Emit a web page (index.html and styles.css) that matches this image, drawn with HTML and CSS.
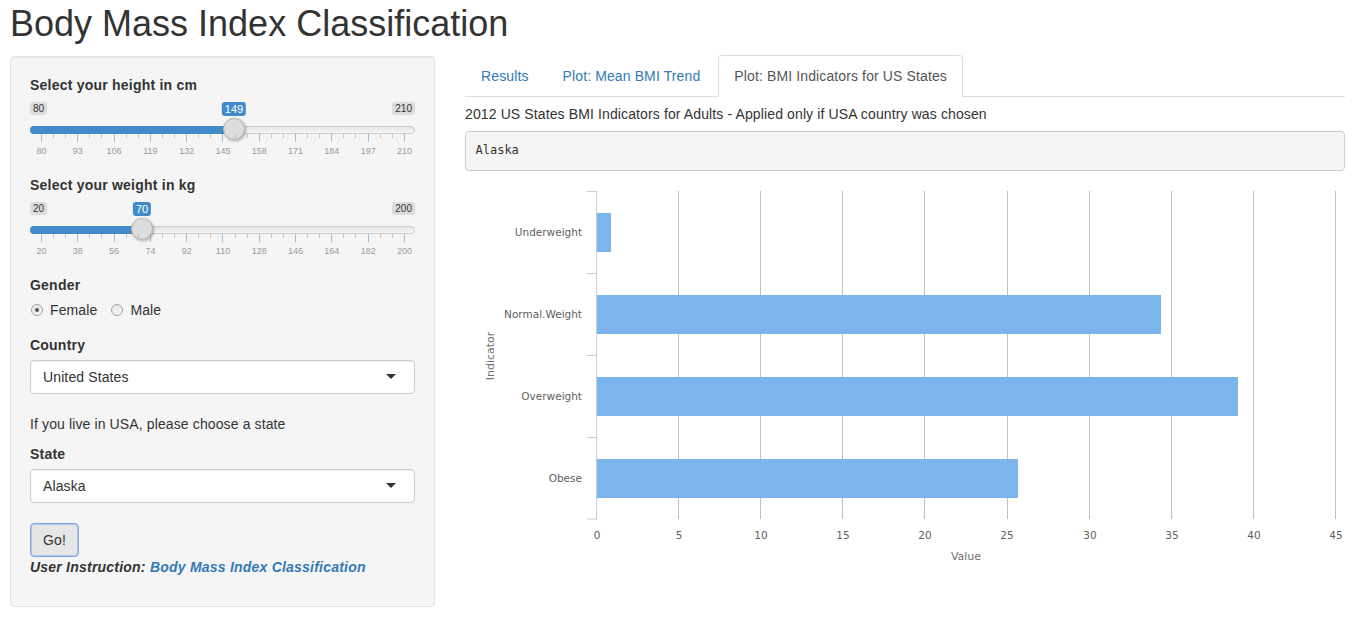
FILE: index.html
```html
<!DOCTYPE html>
<html lang="en">
<head>
<meta charset="utf-8">
<title>Body Mass Index Classification</title>
<link rel="stylesheet" href="styles.css">
</head>
<body>
<div class="page">
  <h1 class="title">Body Mass Index Classification</h1>
  <div class="layout">
    <aside class="well">
      <div class="form-group">
        <label class="control-label">Select your height in cm</label>
        <div class="irs">
          <div class="irs-labels">
            <span class="irs-min">80</span>
            <span class="irs-max">210</span>
          </div>
          <span class="irs-single" style="left:204px">149</span>
          <div class="irs-track">
            <span class="irs-bar" style="width:204px"></span>
            <span class="irs-handle" style="left:193px"></span>
          </div>
          <div class="irs-grid">
            <div class="irs-ticks">
              <i class="big"></i><i></i><i></i><i class="big"></i><i></i><i></i><i class="big"></i><i></i><i></i><i class="big"></i><i></i><i></i><i class="big"></i><i></i><i></i><i class="big"></i><i></i><i></i><i class="big"></i><i></i><i></i><i class="big"></i><i></i><i></i><i class="big"></i><i></i><i></i><i class="big"></i><i></i><i></i><i class="big"></i>
            </div>
            <div class="irs-grid-text">
              <span><b>80</b></span><span><b>93</b></span><span><b>106</b></span><span><b>119</b></span><span><b>132</b></span><span><b>145</b></span><span><b>158</b></span><span><b>171</b></span><span><b>184</b></span><span><b>197</b></span><span><b>210</b></span>
            </div>
          </div>
        </div>
      </div>

      <div class="form-group">
        <label class="control-label">Select your weight in kg</label>
        <div class="irs">
          <div class="irs-labels">
            <span class="irs-min">20</span>
            <span class="irs-max">200</span>
          </div>
          <span class="irs-single" style="left:112px">70</span>
          <div class="irs-track">
            <span class="irs-bar" style="width:112px"></span>
            <span class="irs-handle" style="left:101px"></span>
          </div>
          <div class="irs-grid">
            <div class="irs-ticks">
              <i class="big"></i><i></i><i></i><i class="big"></i><i></i><i></i><i class="big"></i><i></i><i></i><i class="big"></i><i></i><i></i><i class="big"></i><i></i><i></i><i class="big"></i><i></i><i></i><i class="big"></i><i></i><i></i><i class="big"></i><i></i><i></i><i class="big"></i><i></i><i></i><i class="big"></i><i></i><i></i><i class="big"></i>
            </div>
            <div class="irs-grid-text">
              <span><b>20</b></span><span><b>38</b></span><span><b>56</b></span><span><b>74</b></span><span><b>92</b></span><span><b>110</b></span><span><b>128</b></span><span><b>146</b></span><span><b>164</b></span><span><b>182</b></span><span><b>200</b></span>
            </div>
          </div>
        </div>
      </div>

      <div class="form-group">
        <label class="control-label">Gender</label>
        <div class="radio-row">
          <span class="radio checked"></span><span class="radio-text">Female</span>
          <span class="radio second"></span><span class="radio-text">Male</span>
        </div>
      </div>

      <div class="form-group">
        <label class="control-label">Country</label>
        <div class="select-box"><span>United States</span><span class="caret"></span></div>
      </div>

      <p class="hint">If you live in USA, please choose a state</p>

      <div class="form-group state-group">
        <label class="control-label">State</label>
        <div class="select-box"><span>Alaska</span><span class="caret"></span></div>
      </div>

      <div><button class="btn" type="button">Go!</button></div>
      <div class="instruction"><span class="instr-label">User Instruction:</span> <a class="instr-link" href="#">Body Mass Index Classification</a></div>
    </aside>

    <main class="main">
      <ul class="nav-tabs">
        <li><a href="#">Results</a></li>
        <li><a href="#">Plot: Mean BMI Trend</a></li>
        <li class="active"><a href="#">Plot: BMI Indicators for US States</a></li>
      </ul>
      <div class="tab-content">
        <p class="caption">2012 US States BMI Indicators for Adults - Applied only if USA country was chosen</p>
        <pre class="output">Alaska</pre>
        <svg class="chart" width="880" height="400" viewBox="465 180 880 400" xmlns="http://www.w3.org/2000/svg">
          <g class="grid" stroke="#c0c0c0" stroke-width="1">
            <line x1="678.5" y1="190" x2="678.5" y2="518"/>
            <line x1="760.5" y1="190" x2="760.5" y2="518"/>
            <line x1="842.5" y1="190" x2="842.5" y2="518"/>
            <line x1="924.5" y1="190" x2="924.5" y2="518"/>
            <line x1="1007.5" y1="190" x2="1007.5" y2="518"/>
            <line x1="1089.5" y1="190" x2="1089.5" y2="518"/>
            <line x1="1171.5" y1="190" x2="1171.5" y2="518"/>
            <line x1="1253.5" y1="190" x2="1253.5" y2="518"/>
            <line x1="1335.5" y1="190" x2="1335.5" y2="518"/>
          </g>
          <g class="bars" fill="#7cb5ec">
            <rect x="596" y="212" width="15" height="39"/>
            <rect x="596" y="294" width="565" height="39"/>
            <rect x="596" y="376" width="642" height="39"/>
            <rect x="596" y="458" width="422" height="39"/>
          </g>
          <g class="axis" stroke="#c0d0e0" stroke-width="1">
            <line x1="596.5" y1="190" x2="596.5" y2="518.5"/>
            <line x1="587" y1="190.5" x2="597" y2="190.5"/>
            <line x1="587" y1="272.5" x2="597" y2="272.5"/>
            <line x1="587" y1="354.5" x2="597" y2="354.5"/>
            <line x1="587" y1="436.5" x2="597" y2="436.5"/>
            <line x1="587" y1="518" x2="597" y2="518"/>
          </g>
          <g class="cat-labels" text-anchor="end">
            <text x="582" y="235">Underweight</text>
            <text x="582" y="317">Normal.Weight</text>
            <text x="582" y="399">Overweight</text>
            <text x="582" y="481">Obese</text>
          </g>
          <g class="val-labels" text-anchor="middle">
            <text x="597" y="538">0</text>
            <text x="679" y="538">5</text>
            <text x="761" y="538">10</text>
            <text x="843" y="538">15</text>
            <text x="925" y="538">20</text>
            <text x="1007" y="538">25</text>
            <text x="1090" y="538">30</text>
            <text x="1172" y="538">35</text>
            <text x="1254" y="538">40</text>
            <text x="1336" y="538">45</text>
          </g>
          <text class="axis-title" x="966" y="559" text-anchor="middle">Value</text>
          <text class="axis-title" x="494" y="355" text-anchor="middle" transform="rotate(-90 494 355)">Indicator</text>
        </svg>
      </div>
    </main>
  </div>
</div>
</body>
</html>
```

FILE: styles.css
```css
* { box-sizing: border-box; }

body {
  margin: 0;
  font-family: "Liberation Sans", Arial, Helvetica, sans-serif;
  font-size: 14px;
  line-height: 20px;
  letter-spacing: 0.12px;
  color: #333;
  background: #fff;
}

.page {
  padding: 0 8px 0 10px;
}

.title {
  margin: 4px 0 12px;
  font-size: 36px;
  font-weight: 400;
  line-height: 1.1;
  letter-spacing: 0;
  color: #333;
}

.layout {
  display: grid;
  grid-template-columns: 425px 1fr;
  column-gap: 30px;
  align-items: start;
}

/* ---------- sidebar ---------- */
.well {
  background: #f5f5f5;
  border: 1px solid #e3e3e3;
  border-radius: 4px;
  box-shadow: inset 0 1px 1px rgba(0, 0, 0, 0.05);
  padding: 18px 19px 19px;
}

.form-group {
  margin-bottom: 15px;
}

.control-label {
  display: block;
  font-weight: 700;
  letter-spacing: 0.22px;
  margin-bottom: 5px;
}

/* range slider */
.irs {
  position: relative;
  height: 60px;
  letter-spacing: 0;
}

.irs-labels {
  display: flex;
  justify-content: space-between;
  align-items: flex-start;
  height: 26px;
  padding-top: 2px;
}

.irs-min,
.irs-max {
  font-size: 10px;
  line-height: 11px;
  padding: 1px 3px;
  background: rgba(0, 0, 0, 0.1);
  border-radius: 3px;
  color: #333;
}

.irs-single {
  position: absolute;
  top: 2px;
  transform: translateX(-50%);
  font-size: 11px;
  line-height: 12px;
  padding: 1px 3px;
  background: #428bca;
  color: #fff;
  border-radius: 3px;
  z-index: 2;
}

.irs-track {
  position: relative;
  height: 8px;
  border: 1px solid #ccc;
  border-radius: 16px;
  background: linear-gradient(to bottom, #ddd -50%, #fff 150%);
}

.irs-bar {
  position: absolute;
  left: -1px;
  top: -1px;
  height: 8px;
  background: #428bca;
  border-radius: 8px 0 0 8px;
}

.irs-handle {
  position: absolute;
  top: -9px;
  width: 22px;
  height: 22px;
  border-radius: 50%;
  background: #dddddd;
  border: 1px solid #b8b8b8;
  box-shadow: 1px 1px 3px rgba(0, 0, 0, 0.3);
  margin-left: -1px;
}

.irs-grid {
  margin: 0 10px 0 11px;
}

.irs-ticks {
  display: flex;
  justify-content: space-between;
  align-items: flex-start;
  height: 8px;
}

.irs-ticks i {
  display: block;
  width: 1px;
  height: 4px;
  background: #999;
  opacity: 0.5;
}

.irs-ticks i.big {
  height: 8px;
  background: #428bca;
}

.irs-grid-text {
  display: flex;
  justify-content: space-between;
  margin-top: 4px;
  height: 10px;
}

.irs-grid-text span {
  width: 1px;
  display: flex;
  justify-content: center;
}

.irs-grid-text b {
  font-weight: 400;
  font-size: 9px;
  line-height: 10px;
  color: #999;
  white-space: nowrap;
}

/* radios */
.radio-row {
  display: flex;
  align-items: center;
  height: 20px;
}

.radio {
  position: relative;
  width: 12px;
  height: 12px;
  border-radius: 50%;
  border: 1px solid #a0a0a0;
  background: linear-gradient(to bottom, #e8e8e8, #f6f6f6);
  margin-left: 1px;
  margin-right: 7px;
}

.radio.second {
  margin-left: 14px;
}

.radio.checked::after {
  content: "";
  position: absolute;
  left: 3px;
  top: 3px;
  width: 4px;
  height: 4px;
  border-radius: 50%;
  background: #555;
}

/* select */
.select-box {
  display: flex;
  align-items: center;
  justify-content: space-between;
  height: 34px;
  padding: 6px 12px;
  background: #fff;
  border: 1px solid #ccc;
  border-radius: 4px;
  box-shadow: inset 0 1px 1px rgba(0, 0, 0, 0.075);
  color: #333;
}

.caret {
  width: 0;
  height: 0;
  border-left: 5px solid transparent;
  border-right: 5px solid transparent;
  border-top: 5px solid #333;
  margin-right: 6px;
}

.hint {
  margin: 20px 0 10px;
}

.state-group {
  margin-bottom: 20px;
}

.btn {
  display: inline-block;
  height: 34px;
  padding: 6px 12px;
  font-family: inherit;
  font-size: 14px;
  line-height: 20px;
  letter-spacing: 0.12px;
  color: #333;
  background: #e6e6e6;
  border: 1px solid #7ea7de;
  border-radius: 4px;
  box-shadow: inset 0 0 0 1px rgba(140, 180, 235, 0.6);
}

.instruction {
  margin-bottom: 10px;
  font-weight: 700;
  font-style: italic;
  letter-spacing: 0.22px;
}

.instr-link {
  color: #337ab7;
  text-decoration: none;
}

/* ---------- main ---------- */
.main {
  min-width: 0;
}

.nav-tabs {
  display: flex;
  list-style: none;
  margin: -1px 0 0;
  padding: 0;
  border-bottom: 1px solid #ddd;
}

.nav-tabs li {
  margin-right: 2px;
  margin-bottom: -1px;
}

.nav-tabs a {
  display: block;
  padding: 10px 15px;
  line-height: 20px;
  border: 1px solid transparent;
  border-radius: 4px 4px 0 0;
  color: #337ab7;
  text-decoration: none;
}

.nav-tabs li.active a {
  color: #555;
  background: #fff;
  border-color: #ddd #ddd transparent;
}

.caption {
  margin: 7px 0 7px;
}

.output {
  margin: 0 0 10px;
  padding: 9.5px;
  font-family: "DejaVu Sans Mono", "Liberation Mono", monospace;
  font-size: 12px;
  line-height: 19px;
  letter-spacing: 0;
  color: #333;
  background: #f5f5f5;
  border: 1px solid #ccc;
  border-radius: 4px;
}

.chart {
  display: block;
  overflow: visible;
  letter-spacing: 0;
}

.chart text {
  font-family: "DejaVu Sans", Verdana, sans-serif;
  font-size: 10.5px;
  fill: #606060;
}

.chart .axis-title {
  font-size: 11px;
  fill: #707070;
}
```
